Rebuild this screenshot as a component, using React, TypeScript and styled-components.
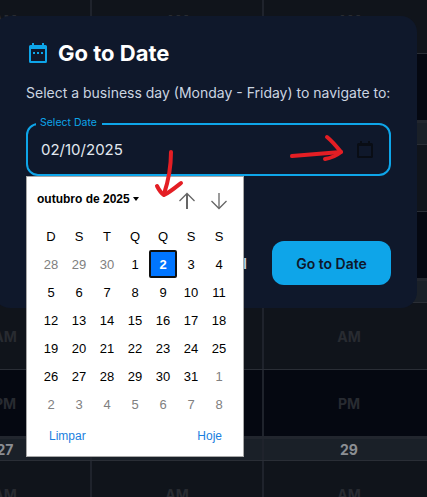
import React from "react"
import styled, { createGlobalStyle } from "styled-components"

const Global = createGlobalStyle`
  html, body {
    margin: 0;
    padding: 0;
    background: #10141b;
    overflow: hidden;
  }
  * {
    box-sizing: border-box;
  }
`

const Page = styled.div`
  position: relative;
  width: 427px;
  height: 497px;
  overflow: hidden;
  font-family: Inter, "Liberation Sans", sans-serif;
`

const Schedule = styled.div`
  width: 516px;
  margin-left: -80px;
  margin-top: -13px;
`

type RowKind = "am" | "pm" | "day"

const rowHeights: Record<RowKind, string> = { am: "67px", pm: "66px", day: "25px" }
const rowColors: Record<RowKind, string> = { am: "#10141b", pm: "#050811", day: "#1a2028" }

const Row = styled.div<{ $kind: RowKind }>`
  display: grid;
  grid-template-columns: repeat(3, 172px);
  height: ${(p) => rowHeights[p.$kind]};
  background: ${(p) => rowColors[p.$kind]};
  border-top: ${(p) => (p.$kind === "day" ? "3px solid #22262e" : "none")};
  border-bottom: ${(p) => (p.$kind === "pm" ? "none" : "1px solid #2a2e36")};
`

const Cell = styled.div<{ $kind: RowKind }>`
  display: flex;
  align-items: center;
  justify-content: center;
  border-right: 2px solid #1f232c;
  font-size: 14px;
  font-weight: 700;
  color: ${(p) => (p.$kind === "day" ? "#8b8e93" : "#282b31")};
`

const Modal = styled.div`
  position: absolute;
  top: 16px;
  left: -6px;
  width: 423px;
  height: 292px;
  padding: 23px 26px 23px 32px;
  background: #0f182b;
  border-radius: 16px;
`

const Title = styled.h2`
  display: flex;
  align-items: center;
  gap: 11px;
  height: 28px;
  margin: 0 0 0 3px;
  font-size: 22px;
  font-weight: 700;
  color: #ffffff;
`

const Lead = styled.p`
  margin: 16px 0 0;
  font-size: 14px;
  line-height: 20px;
  white-space: nowrap;
  color: #cbd5e1;
`

const Field = styled.div`
  position: relative;
  display: flex;
  align-items: center;
  justify-content: space-between;
  height: 53px;
  margin-top: 20px;
  padding: 0 16px 0 13px;
  border: 2px solid #0ea5e9;
  border-radius: 12px;
`

const FieldLabel = styled.span`
  position: absolute;
  top: -9px;
  left: 8px;
  padding: 0 5px 0 4px;
  background: #0f182b;
  font-size: 10.5px;
  line-height: 14px;
  color: #0ea5e9;
`

const FieldValue = styled.span`
  font-size: 15px;
  color: #e2e8f0;
`

const Popup = styled.div`
  position: absolute;
  top: 51px;
  left: -2px;
  z-index: 2;
  width: 218px;
  height: 281px;
  padding: 0 10px;
  background: #ffffff;
  border: 1px solid #a8a8a8;
  font-family: "Liberation Sans", Arial, sans-serif;
  color: #000000;
`

const PopupHead = styled.div`
  display: flex;
  align-items: center;
  height: 44px;
`

const MonthName = styled.span`
  font-size: 12px;
  font-weight: 700;
  margin-right: 3px;
`

const Caret = styled.span`
  width: 0;
  height: 0;
  margin-right: auto;
  border-left: 3.5px solid transparent;
  border-right: 3.5px solid transparent;
  border-top: 4px solid #000000;
`

const Stepper = styled.div`
  display: flex;
  align-items: center;
  gap: 14px;
  margin-right: 5px;
  margin-top: 3px;
`

const Days = styled.div`
  display: grid;
  grid-template-columns: repeat(7, 28px);
  grid-auto-rows: 28px;
  margin-top: 1px;
`

const Day = styled.span<{ $muted?: boolean; $selected?: boolean }>`
  display: flex;
  align-items: center;
  justify-content: center;
  font-size: 13px;
  font-weight: ${(p) => (p.$selected ? 700 : 400)};
  color: ${(p) => (p.$selected ? "#ffffff" : p.$muted ? "#808080" : "#000000")};
  background: ${(p) => (p.$selected ? "#0075ff" : "transparent")};
  border: ${(p) => (p.$selected ? "2px solid #101010" : "none")};
  border-radius: ${(p) => (p.$selected ? "2px" : "0")};
`

const PopupFoot = styled.div`
  display: flex;
  justify-content: space-between;
  margin-top: 10px;
  padding: 0 11px 0 12px;
  font-size: 12px;
  line-height: 16px;
  color: #1a7fe0;
`

const Actions = styled.div`
  display: flex;
  align-items: center;
  justify-content: flex-end;
  gap: 25px;
  margin-top: 65px;
`

const TextButton = styled.span`
  font-size: 14px;
  font-weight: 600;
  color: #cbd5e1;
`

const PrimaryButton = styled.button`
  width: 119px;
  height: 44px;
  border: none;
  border-radius: 12px;
  background: #0ea5e9;
  font-family: inherit;
  font-size: 14px;
  font-weight: 600;
  color: #0f172a;
`

const Scribble = styled.svg`
  position: absolute;
  top: 0;
  left: 0;
  z-index: 3;
  pointer-events: none;
`

const schedule: { kind: RowKind; labels: string[] }[] = [
  { kind: "am", labels: ["AM", "AM", "AM"] },
  { kind: "pm", labels: ["PM", "PM", "PM"] },
  { kind: "day", labels: ["13", "14", "15"] },
  { kind: "am", labels: ["AM", "AM", "AM"] },
  { kind: "pm", labels: ["PM", "PM", "PM"] },
  { kind: "day", labels: ["20", "21", "22"] },
  { kind: "am", labels: ["AM", "AM", "AM"] },
  { kind: "pm", labels: ["PM", "PM", "PM"] },
  { kind: "day", labels: ["27", "28", "29"] },
  { kind: "am", labels: ["AM", "AM", "AM"] },
]

const weekdays = ["D", "S", "T", "Q", "Q", "S", "S"]

const calendarDays = [
  ...[28, 29, 30].map((n) => ({ n, muted: true })),
  ...Array.from({ length: 31 }, (_, i) => ({ n: i + 1, muted: false })),
  ...Array.from({ length: 8 }, (_, i) => ({ n: i + 1, muted: true })),
]

const TitleIcon = () => (
  <svg width="18" height="20" viewBox="0 0 18 20" fill="none">
    <path d="M3 0h2v2h8V0h2v2h1.5A1.5 1.5 0 0 1 18 3.5v15a1.5 1.5 0 0 1-1.5 1.5h-15A1.5 1.5 0 0 1 0 18.500v-15A1.500 1.500 0 0 1 1.500 2H3z" fill="#0ea5e9" />
    <rect x="2" y="6" width="14" height="12" fill="#0f182b" />
    <rect x="4" y="9" width="2" height="2" fill="#0ea5e9" />
    <rect x="8" y="9" width="2" height="2" fill="#0ea5e9" />
    <rect x="12" y="9" width="2" height="2" fill="#0ea5e9" />
  </svg>
)

const PickerIcon = () => (
  <svg width="16" height="17" viewBox="0 0 16 17" fill="none">
    <path d="M3 0h2v2h6V0h2v2h1.500A1.500 1.500 0 0 1 16 3.500v12a1.500 1.500 0 0 1-1.500 1.500h-13A1.500 1.500 0 0 1 0 15.500v-12A1.500 1.500 0 0 1 1.500 2H3z" fill="#090d15" />
    <rect x="2" y="5" width="12" height="10" fill="#0f182b" />
  </svg>
)

const UpArrow = () => (
  <svg width="18" height="18" viewBox="0 0 18 18" fill="none" stroke="#666666">
    <path d="M9 17V2" strokeWidth="2" />
    <path d="M1.500 9l7.500-7.500L16.500 9" strokeWidth="1.300" />
  </svg>
)

const DownArrow = () => (
  <svg width="18" height="18" viewBox="0 0 18 18" fill="none" stroke="#666666">
    <path d="M9 1v15" strokeWidth="1.300" />
    <path d="M1.500 9l7.500 7.500L16.500 9" strokeWidth="1.300" />
  </svg>
)

const App = () => {
  return (
    <Page>
      <Global />
      <Schedule>
        {schedule.map((row, i) => (
          <Row key={i} $kind={row.kind}>
            {row.labels.map((label, j) => (
              <Cell key={j} $kind={row.kind}>
                {label}
              </Cell>
            ))}
          </Row>
        ))}
      </Schedule>

      <Modal>
        <Title>
          <TitleIcon />
          Go to Date
        </Title>
        <Lead>Select a business day (Monday - Friday) to navigate to:</Lead>
        <Field>
          <FieldLabel>Select Date</FieldLabel>
          <FieldValue>02/10/2025</FieldValue>
          <PickerIcon />
          <Popup>
            <PopupHead>
              <MonthName>outubro de 2025</MonthName>
              <Caret />
              <Stepper>
                <UpArrow />
                <DownArrow />
              </Stepper>
            </PopupHead>
            <Days>
              {weekdays.map((d, i) => (
                <Day key={i}>{d}</Day>
              ))}
              {calendarDays.map((d, i) => (
                <Day key={i} $muted={d.muted} $selected={!d.muted && d.n === 2}>
                  {d.n}
                </Day>
              ))}
            </Days>
            <PopupFoot>
              <span>Limpar</span>
              <span>Hoje</span>
            </PopupFoot>
          </Popup>
        </Field>
        <Actions>
          <TextButton>Cancel</TextButton>
          <PrimaryButton>Go to Date</PrimaryButton>
        </Actions>
      </Modal>

      <Scribble width="427" height="497" fill="none" stroke="#e41e24" strokeWidth="4" strokeLinecap="round" strokeLinejoin="round">
        <path d="M292 156L341 152" />
        <path d="M327 137C332 141 337 147 341 152C336 156 331 158 325 159" />
        <path d="M171 152C171 168 168 182 164 194" />
        <path d="M157 186C159 190 161 193 164 195C170 192 176 187 181 183" />
      </Scribble>
    </Page>
  )
}

export default App
